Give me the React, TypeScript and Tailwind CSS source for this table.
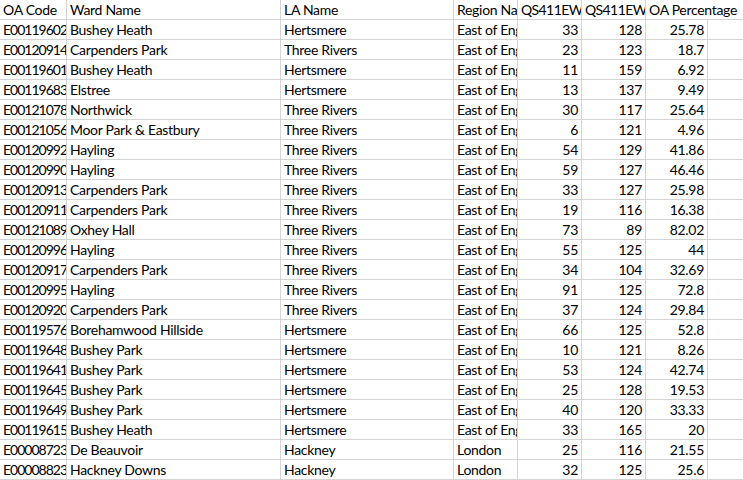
const rows: [string, string, string, string, number, number, number][] = [
  ["E00119602", "Bushey Heath", "Hertsmere", "East of England", 33, 128, 25.78],
  ["E00120914", "Carpenders Park", "Three Rivers", "East of England", 23, 123, 18.7],
  ["E00119601", "Bushey Heath", "Hertsmere", "East of England", 11, 159, 6.92],
  ["E00119683", "Elstree", "Hertsmere", "East of England", 13, 137, 9.49],
  ["E00121078", "Northwick", "Three Rivers", "East of England", 30, 117, 25.64],
  ["E00121056", "Moor Park & Eastbury", "Three Rivers", "East of England", 6, 121, 4.96],
  ["E00120992", "Hayling", "Three Rivers", "East of England", 54, 129, 41.86],
  ["E00120990", "Hayling", "Three Rivers", "East of England", 59, 127, 46.46],
  ["E00120913", "Carpenders Park", "Three Rivers", "East of England", 33, 127, 25.98],
  ["E00120911", "Carpenders Park", "Three Rivers", "East of England", 19, 116, 16.38],
  ["E00121089", "Oxhey Hall", "Three Rivers", "East of England", 73, 89, 82.02],
  ["E00120996", "Hayling", "Three Rivers", "East of England", 55, 125, 44],
  ["E00120917", "Carpenders Park", "Three Rivers", "East of England", 34, 104, 32.69],
  ["E00120995", "Hayling", "Three Rivers", "East of England", 91, 125, 72.8],
  ["E00120920", "Carpenders Park", "Three Rivers", "East of England", 37, 124, 29.84],
  ["E00119576", "Borehamwood Hillside", "Hertsmere", "East of England", 66, 125, 52.8],
  ["E00119648", "Bushey Park", "Hertsmere", "East of England", 10, 121, 8.26],
  ["E00119641", "Bushey Park", "Hertsmere", "East of England", 53, 124, 42.74],
  ["E00119645", "Bushey Park", "Hertsmere", "East of England", 25, 128, 19.53],
  ["E00119649", "Bushey Park", "Hertsmere", "East of England", 40, 120, 33.33],
  ["E00119615", "Bushey Heath", "Hertsmere", "East of England", 33, 165, 20],
  ["E00008723", "De Beauvoir", "Hackney", "London", 25, 116, 21.55],
  ["E00008823", "Hackney Downs", "Hackney", "London", 32, 125, 25.6],
];

const cell =
  "h-[20px] shrink-0 border-r border-b border-[#d4d4d4] overflow-hidden whitespace-nowrap leading-[20px] px-[3px]";

const App = () => {
  return (
    <div className="w-[744px] h-[480px] overflow-hidden bg-white text-black text-[14px] tracking-[-0.3px] font-['Lato',sans-serif]">
      {/* header */}
      <div className="flex">
        <div className={`${cell} w-[67px]`}>OA Code</div>
        <div className={`${cell} w-[214px]`}>Ward Name</div>
        <div className={`${cell} w-[173px]`}>LA Name</div>
        <div className={`${cell} w-[64px]`}>Region Name</div>
        <div className={`${cell} w-[64px] tracking-[-0.6px]`}>QS411EW0001</div>
        <div className={`${cell} w-[64px] tracking-[-0.6px]`}>QS411EW0002</div>
        <div className="h-[20px] w-[62px] shrink-0 border-b border-[#d4d4d4] whitespace-nowrap leading-[20px] px-[3px] relative z-10">
          OA Percentage
        </div>
        <div className={`${cell} flex-1`}></div>
      </div>

      {/* data rows */}
      {rows.map(([code, ward, la, region, a, b, pct]) => (
        <div key={code} className="flex">
          <div className={`${cell} w-[67px] tracking-[-1px]`}>{code}</div>
          <div className={`${cell} w-[214px]`}>{ward}</div>
          <div className={`${cell} w-[173px]`}>{la}</div>
          <div className={`${cell} w-[64px]`}>{region}</div>
          <div className={`${cell} w-[64px] text-right`}>{a}</div>
          <div className={`${cell} w-[64px] text-right`}>{b}</div>
          <div className={`${cell} w-[62px] text-right`}>{pct}</div>
          <div className={`${cell} flex-1`}></div>
        </div>
      ))}
    </div>
  );
};

export default App;
